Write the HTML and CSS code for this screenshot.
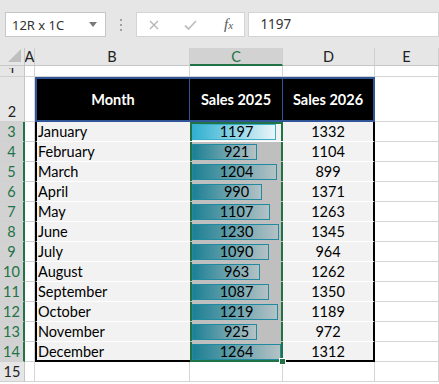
FILE: index.html
```html
<!DOCTYPE html>
<html lang="en">
<head>
  <meta charset="UTF-8">
  <meta name="viewport" content="width=device-width, initial-scale=1.0">
  <title>Sales Data Bars</title>
  <link rel="stylesheet" href="styles.css">
</head>
<body>
  <div class="window">

    <!-- Formula Bar -->
    <div class="formula-bar">
      <div class="name-box">
        <span>12R x 1C</span>
        <span class="caret"></span>
      </div>
      <div class="grip"><i></i><i></i><i></i></div>
      <div class="fx-box">
        <svg class="icon-cancel" width="10" height="10" viewBox="0 0 10 10">
          <path d="M1 1 L9 9 M9 1 L1 9" stroke="#b4b4b4" stroke-width="1.3" fill="none"/>
        </svg>
        <svg class="icon-enter" width="13" height="10" viewBox="0 0 13 10">
          <path d="M1 5.5 L4.5 9 L12 1" stroke="#c0c0c0" stroke-width="1.8" fill="none"/>
        </svg>
        <span class="fx">f<span>x</span></span>
      </div>
      <div class="formula-input">1197</div>
    </div>

    <!-- Sheet -->
    <div class="sheet" id="sheet">
      <div class="corner"><span class="corner-mark"></span></div>
      <div class="col-head">A</div>
      <div class="col-head">B</div>
      <div class="col-head selected">C</div>
      <div class="col-head">D</div>
      <div class="col-head">E</div>

      <div class="row-head short"><span>1</span></div>
      <div class="cell"></div>
      <div class="cell"></div>
      <div class="cell"></div>
      <div class="cell"></div>
      <div class="cell"></div>

      <div class="row-head tall">2</div>
      <div class="cell"></div>
      <div class="cell th first">Month</div>
      <div class="cell th">Sales 2025</div>
      <div class="cell th last">Sales 2026</div>
      <div class="cell"></div>
    </div>
  </div>

  <script>
    const sales = [
      ["January", 1197, 1332],
      ["February", 921, 1104],
      ["March", 1204, 899],
      ["April", 990, 1371],
      ["May", 1107, 1263],
      ["June", 1230, 1345],
      ["July", 1090, 964],
      ["August", 963, 1262],
      ["September", 1087, 1350],
      ["October", 1219, 1189],
      ["November", 925, 972],
      ["December", 1264, 1312]
    ];

    // Build data rows with data bars in column C
    const sheet = document.getElementById("sheet");
    const max = Math.max(...sales.map(row => row[1]));
    let html = "";

    sales.forEach((row, i) => {
      const last = i === sales.length - 1 ? " last-row" : "";
      const active = i === 0 ? " active" : "";
      const width = (row[1] / max * 89).toFixed(1);
      const handle = last ? `<span class="handle"></span>` : "";
      html += `
        <div class="row-head selected">${i + 3}</div>
        <div class="cell"></div>
        <div class="cell td month${last}">${row[0]}</div>
        <div class="cell td bar-cell${active}${last}">
          <span class="bar" style="width:${width}px"></span>
          <span class="num">${row[1]}</span>
          ${handle}
        </div>
        <div class="cell td num-cell${last}">${row[2]}</div>
        <div class="cell"></div>`;
    });

    html += `
      <div class="row-head">15</div>
      <div class="cell"></div>
      <div class="cell"></div>
      <div class="cell"></div>
      <div class="cell"></div>
      <div class="cell"></div>`;

    sheet.insertAdjacentHTML("beforeend", html);
  </script>
</body>
</html>
```

FILE: styles.css
```css
* {
  margin: 0;
  padding: 0;
  box-sizing: border-box;
}
body {
  width: 439px;
  height: 384px;
  overflow: hidden;
  background: #fff;
  font-family: Lato, "Liberation Sans", sans-serif;
  color: #000;
}

/* Formula bar */
.formula-bar {
  height: 48px;
  background: #e6e6e6;
  display: flex;
  align-items: flex-start;
  padding: 12px 0 0 5px;
  font-family: "Noto Sans", "Open Sans", sans-serif;
  font-size: 13px;
  color: #333;
}
.name-box {
  width: 102px;
  height: 25px;
  background: #fff;
  border: 1px solid #c6c6c6;
  display: flex;
  align-items: center;
  justify-content: space-between;
  padding: 0 8px 0 6px;
}
.caret {
  border-left: 4px solid transparent;
  border-right: 4px solid transparent;
  border-top: 5px solid #7a7a7a;
}
.grip {
  width: 30px;
  height: 25px;
  display: flex;
  flex-direction: column;
  align-items: center;
  gap: 3px;
  padding-top: 7px;
}
.grip i {
  width: 2px;
  height: 2px;
  background: #a0a0a0;
}
.fx-box {
  width: 110px;
  height: 25px;
  background: #fff;
  border: 1px solid #d4d4d4;
  display: flex;
  align-items: center;
  padding-left: 12px;
}
.icon-enter {
  margin-left: 25px;
}
.fx {
  margin-left: 27px;
  font-family: "Liberation Serif", serif;
  font-style: italic;
  font-size: 15px;
  color: #555;
}
.fx span {
  font-size: 11px;
}
.formula-input {
  width: 192px;
  height: 25px;
  margin-left: 3px;
  background: #fff;
  border: 1px solid #d4d4d4;
  padding-left: 11px;
  line-height: 23px;
  font-size: 13.5px;
}

/* Sheet grid */
.sheet {
  display: grid;
  grid-template-columns: 25px 10px 155px 93px 92px 64px;
  grid-template-rows: 18px 11px 45px repeat(13, 20px);
  font-size: 14.5px;
}
.cell {
  border-right: 1px solid #d4d4d4;
  border-bottom: 1px solid #d4d4d4;
  display: flex;
  align-items: center;
}
.corner {
  background: #e6e6e6;
  border-right: 1px solid #c6c6c6;
  border-bottom: 1px solid #c6c6c6;
  position: relative;
}
.corner-mark {
  position: absolute;
  right: 3px;
  bottom: 3px;
  border-left: 13px solid transparent;
  border-bottom: 13px solid #bfbfbf;
}
.col-head {
  background: #e6e6e6;
  border-right: 1px solid #cfcfcf;
  border-bottom: 1px solid #c6c6c6;
  display: flex;
  align-items: center;
  justify-content: center;
  color: #222;
}
.col-head.selected {
  background: #d2d2d2;
  color: #217346;
  border-bottom: 2px solid #217346;
}
.row-head {
  background: #e6e6e6;
  border-right: 1px solid #c6c6c6;
  border-bottom: 1px solid #d0d0d0;
  display: flex;
  align-items: center;
  justify-content: center;
  color: #222;
}
.row-head.short {
  align-items: flex-start;
}
.row-head.short span {
  display: block;
  height: 5px;
  margin-top: 2px;
  overflow: hidden;
  line-height: 5px;
}
.row-head.tall {
  align-items: flex-end;
  padding-bottom: 1px;
}
.row-head.selected {
  background: #d2d2d2;
  color: #217346;
  border-right: 2px solid #217346;
}

/* Table header */
.th {
  background: #000;
  color: #fff;
  font-weight: 700;
  justify-content: center;
  border-top: 2px solid #2f5597;
  border-bottom: 2px solid #2f5597;
  border-right: 1px solid #2f5597;
}
.th.first {
  border-left: 2px solid #2f5597;
}
.th.last {
  border-right: 2px solid #2f5597;
}

/* Table body */
.td {
  background: #f2f2f2;
  border-right: none;
  border-bottom: 1px solid #fff;
}
.td.month {
  border-left: 2px solid #000;
  padding-left: 1px;
}
.td.num-cell {
  justify-content: center;
  border-right: 2px solid #000;
}
.td.last-row {
  border-bottom: 2px solid #000;
}

/* Column C: data bars inside the green selection */
.bar-cell {
  display: grid;
  align-items: start;
  padding: 0 2px;
  background: #bfbfbf;
  border-bottom-color: #bfbfbf;
  box-shadow: inset 2px 0 #217346, inset -2px 0 #217346;
}
.bar-cell.active {
  background: #f2f2f2;
  border-bottom-color: #fff;
  box-shadow: inset 2px 0 #217346, inset -2px 0 #217346, inset 0 2px #217346;
}
.bar-cell.last-row {
  position: relative;
  border-bottom: 2px solid #217346;
}
.bar, .num {
  grid-area: 1 / 1;
}
.bar {
  justify-self: start;
  height: 16px;
  margin-top: 2px;
  background: linear-gradient(to right, #1c8094, #b4c2c5);
  border: 1px solid #1f8aa0;
}
.active .bar {
  background: linear-gradient(to right, #2fb0d2, #eaf6f9);
  border-color: #3aaecb;
}
.num {
  justify-self: center;
  align-self: center;
  position: relative;
}
.handle {
  position: absolute;
  right: -3px;
  bottom: -5px;
  width: 7px;
  height: 7px;
  background: #217346;
  border: 1px solid #fff;
}
```
